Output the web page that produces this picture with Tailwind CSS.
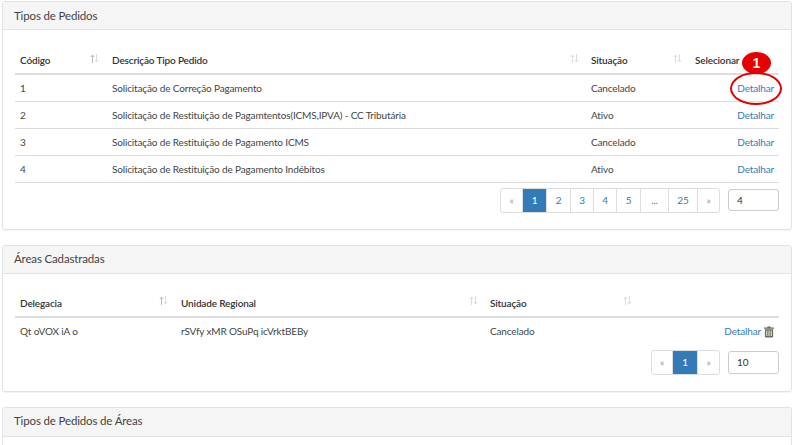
<!DOCTYPE html>
<html lang="en">
<head>
  <meta charset="UTF-8" />
  <title>Tipos de Pedidos</title>
  <script src="https://cdn.jsdelivr.net/npm/@tailwindcss/browser@4"></script>
</head>
<body class="bg-white text-[#333] font-['Lato',sans-serif] text-[10px] tracking-[-0.15px] h-[445px] overflow-hidden">
  <div class="pt-px pl-[2px] w-[792px] h-[445px] overflow-hidden flex flex-col gap-[15px]">

    <!-- Tipos de Pedidos -->
    <section class="relative h-[229px] shrink-0 border border-[#e3e3e3] rounded-[3px] shadow-[0_1px_1px_rgba(0,0,0,.05)]">
      <div class="h-[28px] bg-[#f5f5f5] border-b border-[#e3e3e3] pl-[11px] flex items-center text-[11.5px] text-[#444]">Tipos de Pedidos</div>
      <div class="px-3 pt-[16px]">
        <table class="w-[764px] table-fixed border-collapse">
          <thead>
            <tr class="h-[28px] border-b-2 border-[#ddd] text-left">
              <th class="w-[97px] pl-[5px] pt-[2px] font-semibold relative">Código
                <svg class="absolute right-[13px] top-[8px] w-[9px] h-[9px]" viewBox="0 0 9 9" fill="none" stroke-width="1"><path d="M2.5 9V1M.8 3 2.5 1 4.2 3" stroke="#b9b9c4"/><path d="M6.5 0v8M4.8 6l1.7 2 1.7-2" stroke="#dcdcdc"/></svg>
              </th>
              <th class="w-[479px] pt-[2px] font-semibold relative">Descrição Tipo Pedido
                <svg class="absolute right-[12px] top-[8px] w-[9px] h-[9px]" viewBox="0 0 9 9" fill="none" stroke="#dcdcdc" stroke-width="1"><path d="M2.5 9V1M.8 3 2.5 1 4.2 3M6.5 0v8M4.8 6l1.7 2 1.7-2"/></svg>
              </th>
              <th class="w-[104px] pt-[2px] font-semibold relative">Situação
                <svg class="absolute right-[13px] top-[8px] w-[9px] h-[9px]" viewBox="0 0 9 9" fill="none" stroke="#dcdcdc" stroke-width="1"><path d="M2.5 9V1M.8 3 2.5 1 4.2 3M6.5 0v8M4.8 6l1.7 2 1.7-2"/></svg>
              </th>
              <th class="pt-[2px] font-semibold">Selecionar</th>
            </tr>
          </thead>
          <tbody class="text-[#444]">
            <tr class="h-[27px] border-b border-[#ddd]"><td class="pl-[5px] pt-[2px]">1</td><td class="pt-[2px]">Solicitação de Correção Pagamento</td><td class="pt-[2px]">Cancelado</td><td class="pt-[2px] text-right pr-[5px] text-[#337ab7]">Detalhar</td></tr>
            <tr class="h-[27px] border-b border-[#ddd]"><td class="pl-[5px] pt-[2px]">2</td><td class="pt-[2px]">Solicitação de Restituição de Pagamtentos(ICMS,IPVA) - CC Tributária</td><td class="pt-[2px]">Ativo</td><td class="pt-[2px] text-right pr-[5px] text-[#337ab7]">Detalhar</td></tr>
            <tr class="h-[27px] border-b border-[#ddd]"><td class="pl-[5px] pt-[2px]">3</td><td class="pt-[2px]">Solicitação de Restituição de Pagamento ICMS</td><td class="pt-[2px]">Cancelado</td><td class="pt-[2px] text-right pr-[5px] text-[#337ab7]">Detalhar</td></tr>
            <tr class="h-[27px] border-b border-[#ddd]"><td class="pl-[5px] pt-[2px]">4</td><td class="pt-[2px]">Solicitação de Restituição de Pagamento Indébitos</td><td class="pt-[2px]">Ativo</td><td class="pt-[2px] text-right pr-[5px] text-[#337ab7]">Detalhar</td></tr>
          </tbody>
        </table>
        <div class="flex justify-end items-center gap-[8px] mt-[5px] h-[25px]">
          <div class="flex h-[25px] border border-[#ddd] rounded-[3px] text-[#337ab7] divide-x divide-[#ddd]">
            <span class="w-[22px] flex items-center justify-center text-[#999]">«</span>
            <span class="w-[24px] flex items-center justify-center bg-[#337ab7] text-white">1</span>
            <span class="w-[24px] flex items-center justify-center">2</span>
            <span class="w-[23px] flex items-center justify-center">3</span>
            <span class="w-[23px] flex items-center justify-center">4</span>
            <span class="w-[24px] flex items-center justify-center">5</span>
            <span class="w-[28px] flex items-center justify-center text-[#777]">...</span>
            <span class="w-[29px] flex items-center justify-center">25</span>
            <span class="w-[21px] flex items-center justify-center text-[#999]">»</span>
          </div>
          <div class="w-[51px] h-[22px] border border-[#ccc] rounded-[3px] flex items-center pl-2">4</div>
        </div>
      </div>
      <!-- red callout over Detalhar -->
      <div class="absolute left-[727px] top-[70px] w-[52px] h-[33px] border-2 border-[#e00000] rounded-[50%]"></div>
      <div class="absolute left-[739px] top-[50px] w-[29px] h-[22px] rounded-[50%] bg-[#e60000] text-white font-['Liberation_Sans',sans-serif] tracking-normal font-bold text-[14px] flex items-center justify-center">1</div>
    </section>

    <!-- Áreas Cadastradas -->
    <section class="h-[147px] shrink-0 border border-[#e3e3e3] rounded-[3px] shadow-[0_1px_1px_rgba(0,0,0,.05)]">
      <div class="h-[28px] pb-[2px] bg-[#f5f5f5] border-b border-[#e3e3e3] pl-[11px] flex items-center text-[11.5px] text-[#444]">Áreas Cadastradas</div>
      <div class="px-3 pt-[16px]">
        <table class="w-[764px] table-fixed border-collapse">
          <thead>
            <tr class="h-[27px] border-b-2 border-[#ddd] text-left">
              <th class="w-[166px] pl-[5px] font-semibold relative">Delegacia
                <svg class="absolute right-[13px] top-[6px] w-[9px] h-[9px]" viewBox="0 0 9 9" fill="none" stroke-width="1"><path d="M2.5 9V1M.8 3 2.5 1 4.2 3" stroke="#b9b9c4"/><path d="M6.5 0v8M4.8 6l1.7 2 1.7-2" stroke="#dcdcdc"/></svg>
              </th>
              <th class="w-[309px] font-semibold relative">Unidade Regional
                <svg class="absolute right-[12px] top-[6px] w-[9px] h-[9px]" viewBox="0 0 9 9" fill="none" stroke="#dcdcdc" stroke-width="1"><path d="M2.5 9V1M.8 3 2.5 1 4.2 3M6.5 0v8M4.8 6l1.7 2 1.7-2"/></svg>
              </th>
              <th class="w-[144px] font-semibold relative">Situação
                <svg class="absolute right-[2px] top-[6px] w-[9px] h-[9px]" viewBox="0 0 9 9" fill="none" stroke="#dcdcdc" stroke-width="1"><path d="M2.5 9V1M.8 3 2.5 1 4.2 3M6.5 0v8M4.8 6l1.7 2 1.7-2"/></svg>
              </th>
              <th></th>
            </tr>
          </thead>
          <tbody class="text-[#444]">
            <tr class="h-[28px]">
              <td class="pl-[5px]">Qt oVOX iA o</td><td>rSVfy xMR OSuPq icVrktBEBy</td><td>Cancelado</td>
              <td class="pr-[5px]">
                <div class="flex justify-end items-center gap-[3px] text-[#337ab7]">Detalhar
                  <svg class="w-[10px] h-[12px] text-[#6f6a60]" viewBox="0 0 11 12" fill="currentColor"><path d="M4 0h3l.5 1H11v1.4H0V1h3.5zM1 3h9v8a1 1 0 0 1-1 1H2a1 1 0 0 1-1-1zm1.6 1.4v6h1v-6zm2.4 0v6h1v-6zm2.4 0v6h1v-6z"/></svg>
                </div>
              </td>
            </tr>
          </tbody>
        </table>
        <div class="flex justify-end items-center gap-[8px] mt-[5px] h-[25px]">
          <div class="flex h-[25px] border border-[#ddd] rounded-[3px] divide-x divide-[#ddd]">
            <span class="w-[21px] flex items-center justify-center text-[#999]">«</span>
            <span class="w-[25px] flex items-center justify-center bg-[#337ab7] text-white">1</span>
            <span class="w-[21px] flex items-center justify-center text-[#999]">»</span>
          </div>
          <div class="w-[51px] h-[23px] border border-[#ccc] rounded-[3px] flex items-center pl-2">10</div>
        </div>
      </div>
    </section>

    <!-- Tipos de Pedidos de Áreas -->
    <section class="h-[39px] shrink-0 border border-b-0 border-[#e3e3e3] rounded-t-[3px]">
      <div class="h-[29px] pb-[2px] bg-[#f5f5f5] border-b border-[#e3e3e3] pl-[11px] flex items-center text-[11.5px] text-[#444]">Tipos de Pedidos de Áreas</div>
    </section>
  </div>
</body>
</html>
